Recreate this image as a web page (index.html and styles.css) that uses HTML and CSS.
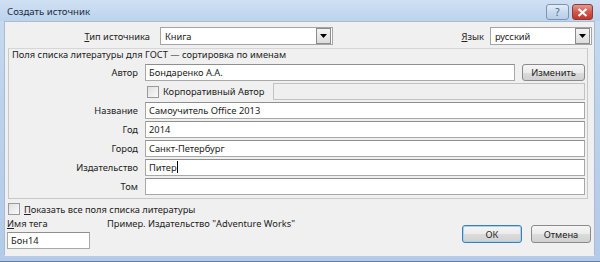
FILE: index.html
```html
<!DOCTYPE html>
<html lang="ru">
<head>
    <meta charset="UTF-8">
    <title>Создать источник</title>
    <link rel="stylesheet" href="styles.css">
</head>
<body>

<div class="window">
    <div class="titlebar">
        <span class="title">Создать источник</span>
        <div class="caption-buttons">
            <span class="cap-btn help">?</span>
            <span class="cap-btn close">
                <svg width="11" height="9" viewBox="0 0 11 9"><path d="M1.5 1 L9.5 8 M9.5 1 L1.5 8" stroke="#fff" stroke-width="2.2"/></svg>
            </span>
        </div>
    </div>

    <div class="client">
        <div class="top-row">
            <label class="top-label"><u>Т</u>ип источника</label>
            <div class="select select-type">
                <span class="select-text">Книга</span>
                <span class="drop"><svg width="7" height="4" viewBox="0 0 7 4"><path d="M0 0 H7 L3.5 4 Z" fill="#000"/></svg></span>
            </div>
            <span class="spacer"></span>
            <label class="lang-label"><u>Я</u>зык</label>
            <div class="select select-lang">
                <span class="select-text">русский</span>
                <span class="drop"><svg width="7" height="4" viewBox="0 0 7 4"><path d="M0 0 H7 L3.5 4 Z" fill="#000"/></svg></span>
            </div>
        </div>

        <div class="panel">
            <div class="panel-caption">Поля списка литературы для ГОСТ — сортировка по именам</div>
            <div class="fields">
                <span class="field-label">Автор</span>
                <div class="field-line">
                    <div class="textbox grow">Бондаренко А.А.</div>
                    <button class="btn edit-btn">Изменить</button>
                </div>

                <span class="field-label"></span>
                <div class="field-line">
                    <span class="check corp-check"></span>
                    <span class="corp-text">Корпоративный Автор</span>
                    <div class="textbox grow disabled"></div>
                </div>

                <span class="field-label">Название</span>
                <div class="textbox">Самоучитель Office 2013</div>

                <span class="field-label">Год</span>
                <div class="textbox">2014</div>

                <span class="field-label">Город</span>
                <div class="textbox">Санкт-Петербург</div>

                <span class="field-label">Издательство</span>
                <div class="textbox">Питер<span class="caret"></span></div>

                <span class="field-label">Том</span>
                <div class="textbox"></div>
            </div>
        </div>

        <div class="show-all">
            <span class="check"></span>
            <span><u>П</u>оказать все поля списка литературы</span>
        </div>

        <div class="bottom">
            <div class="tag-block">
                <div class="tag-line">
                    <span class="tag-label"><u>И</u>мя тега</span>
                    <span class="example">Пример. Издательство "Adventure Works"</span>
                </div>
                <div class="textbox tag-box">Бон14</div>
            </div>
            <div class="dialog-buttons">
                <button class="btn ok-btn">ОК</button>
                <button class="btn">Отмена</button>
            </div>
        </div>
    </div>
</div>

</body>
</html>
```

FILE: styles.css
```css
/* Grundlayout */
body {
    margin: 0;
    font-family: "Noto Sans", "Open Sans", sans-serif;
    font-size: 9.3px;
    color: #222;
}
.window {
    width: 600px;
    height: 262px;
    display: flex;
    flex-direction: column;
    background: linear-gradient(to bottom, #c9dbef, #bcd2ec 40%, #b3cbe8);
    box-sizing: border-box;
    border-bottom: 1px solid #5c7ea8;
}
/* Titelleiste */
.titlebar {
    height: 21px;
    flex: none;
    display: flex;
    align-items: flex-start;
    justify-content: space-between;
    background: linear-gradient(to bottom, #cfe0f3, #bcd3ed);
}
.title {
    margin: 5px 0 0 7px;
    font-size: 9.6px;
    color: #1c2c44;
}
.caption-buttons {
    display: flex;
    gap: 3px;
    margin: 4px 7px 0 0;
}
.cap-btn {
    height: 14px;
    border: 1px solid #7d93b3;
    border-radius: 3px;
    display: flex;
    align-items: center;
    justify-content: center;
    font-size: 10px;
    line-height: 1;
}
.help {
    width: 21px;
    background: linear-gradient(to bottom, #e4edf8, #c9daef 50%, #b8cde8);
    color: #4a5f80;
}
.close {
    width: 19px;
    border-color: #8e3a36;
    background: linear-gradient(to bottom, #e39a92, #d2584c 50%, #c2362a);
}
/* Fensterinhalt */
.client {
    flex: 1;
    margin: 0 5px 5px 4px;
    background: #f0f0f0;
    border: 1px solid #a9bcd6;
    border-bottom-color: #f0f0f0;
    display: flex;
    flex-direction: column;
}
.top-row {
    display: flex;
    align-items: center;
    height: 18px;
    margin-top: 5px;
}
.top-label {
    width: 145px;
    text-align: right;
    margin-right: 10px;
}
.lang-label {
    margin-right: 6px;
}
.spacer {
    flex: 1;
}
.select {
    height: 16px;
    border: 1px solid #a5a5a5;
    background: #fff;
    display: flex;
    align-items: center;
    justify-content: space-between;
}
.select-type {
    width: 171px;
}
.select-lang {
    width: 100px;
    margin-right: 2px;
}
.select-text {
    padding-left: 4px;
}
.drop {
    width: 13px;
    height: 14px;
    margin-right: 1px;
    border: 1px solid #8c8c8c;
    background: linear-gradient(to bottom, #f4f4f4, #dcdcdc);
    display: flex;
    align-items: center;
    justify-content: center;
}
/* Gruppenfeld */
.panel {
    margin: 3px 6px 0 3px;
    border-top: 1px solid #d6d6d6;
    border-left: 1px solid #c8c8c8;
    border-right: 1px solid #c8c8c8;
    border-bottom: 1px solid #c8c8c8;
    padding: 0 2px 2px 0;
}
.panel-caption {
    height: 14px;
    line-height: 12px;
    padding-left: 3px;
}
.fields {
    display: grid;
    grid-template-columns: 129px 1fr;
    column-gap: 7px;
    grid-auto-rows: 19px;
    align-items: center;
}
.field-label {
    text-align: right;
}
.field-line {
    display: flex;
    align-items: center;
}
.textbox {
    height: 15px;
    line-height: 15px;
    border: 1px solid #a8a8a8;
    border-top-color: #8f8f8f;
    background: #fff;
    padding-left: 3px;
    white-space: nowrap;
}
.grow {
    flex: 1;
}
.disabled {
    background: #efefef;
    border-color: #c2c2c2;
    margin-left: 9px;
}
.caret {
    display: inline-block;
    width: 1px;
    height: 12px;
    background: #000;
    vertical-align: -2px;
}
.check {
    width: 10px;
    height: 10px;
    border: 1px solid #9a9a9a;
    background: linear-gradient(135deg, #e0e0e0, #fafafa);
    flex: none;
}
.corp-check {
    margin-left: 2px;
    margin-right: 4px;
}
/* Schaltflächen */
.btn {
    font-family: inherit;
    font-size: 9.3px;
    color: #222;
    height: 18px;
    width: 60px;
    padding: 0;
    border: 1px solid #8a8a8a;
    border-radius: 3px;
    background: linear-gradient(to bottom, #f6f6f6, #ebebeb 50%, #dcdcdc 51%, #d0d0d0);
}
.edit-btn {
    width: 63px;
    height: 17px;
    margin-left: 7px;
}
.ok-btn {
    border-color: #3c7fb1;
    box-shadow: inset 0 0 0 1px #a6d2f0;
}
/* Unterer Bereich */
.show-all {
    display: flex;
    align-items: center;
    gap: 4px;
    margin: 3px 0 0 3px;
    height: 14px;
}
.bottom {
    display: flex;
    justify-content: space-between;
    align-items: flex-end;
}
.tag-block {
    margin-left: 2px;
}
.tag-line {
    height: 16px;
    line-height: 16px;
}
.example {
    margin-left: 57px;
}
.tag-box {
    width: 78px;
}
.dialog-buttons {
    display: flex;
    gap: 9px;
    margin: 0 3px 6px 0;
}
```
